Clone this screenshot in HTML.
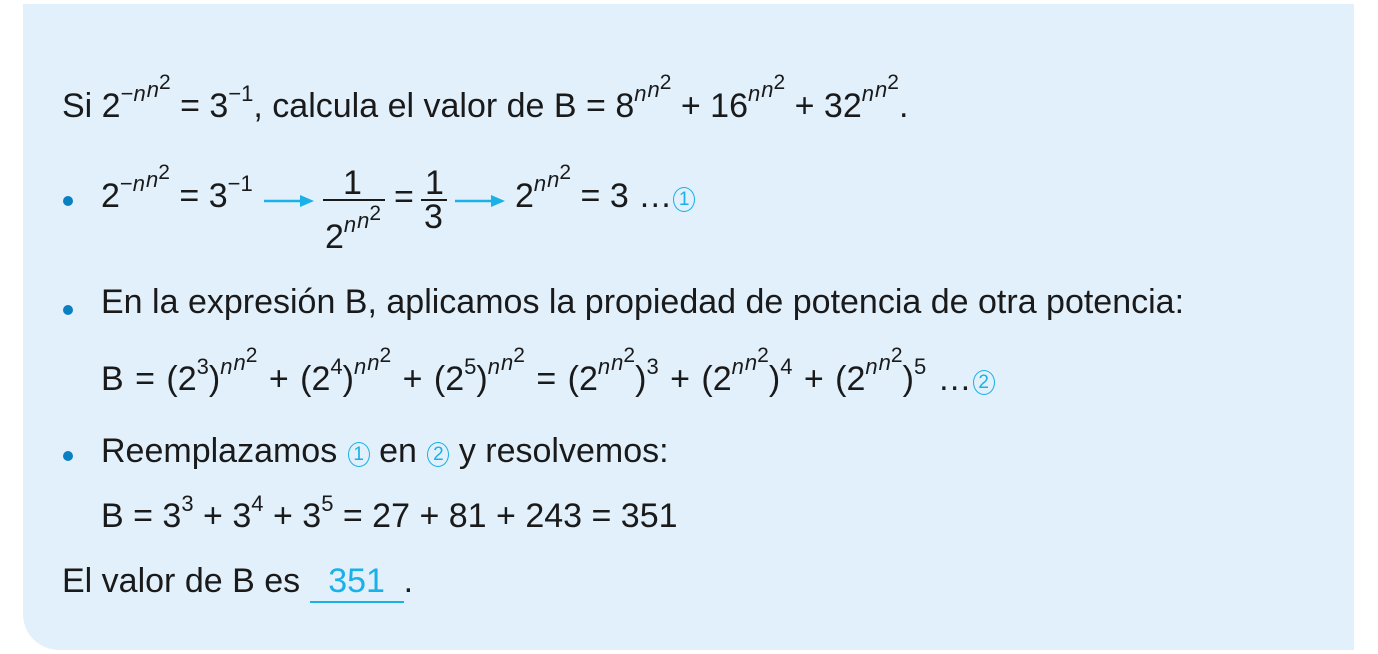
<!DOCTYPE html>
<html><head><meta charset="utf-8"><style>
body{margin:0;width:1378px;height:654px;background:#fff;position:relative;overflow:hidden;font-family:"Liberation Sans",Arial,sans-serif;color:#1a1a1a}
.panel{position:absolute;left:23px;top:4px;width:1331px;height:646px;background:#e1f0fb;border-bottom-left-radius:36px}
.l{position:absolute;font-size:34px;white-space:nowrap;line-height:1}
.e{font-size:22px;position:relative;top:-16px}
.e2{position:relative;top:-4px;margin-left:1px}
.e3{font-size:21px;position:relative;top:-8px}
i{font-style:italic}
.b{position:absolute;width:10px;height:10px;border-radius:50%;background:#0a7fc2}
.circ{display:inline-block;width:20px;height:23px;border:1.5px solid #1ab0e8;border-radius:50%;color:#1ab0e8;font-size:19px;line-height:23px;text-align:center;vertical-align:2px;box-sizing:content-box;margin-left:1px}
</style></head><body>
<div class="panel"></div>

<div class="l" style="left:62px;top:89px">Si 2<span class="e">−<i>n</i><span class="e2"><i>n</i><span class="e3">2</span></span></span> = 3<span class="e">−1</span>, calcula el valor de B = 8<span class="e"><i>n</i><span class="e2"><i>n</i><span class="e3">2</span></span></span> + 16<span class="e"><i>n</i><span class="e2"><i>n</i><span class="e3">2</span></span></span> + 32<span class="e"><i>n</i><span class="e2"><i>n</i><span class="e3">2</span></span></span>.</div>

<div class="b" style="left:63px;top:196px"></div>
<div class="l" style="left:101px;top:179px">2<span class="e">−<i>n</i><span class="e2"><i>n</i><span class="e3">2</span></span></span> = 3<span class="e">−1</span></div>
<svg style="position:absolute;left:262px;top:193px" width="250" height="16">
<line x1="2" y1="8" x2="44" y2="8" stroke="#1ab0e8" stroke-width="2.5"/><polygon points="38,2 52,8 38,14" fill="#1ab0e8"/>
<line x1="193" y1="8" x2="235" y2="8" stroke="#1ab0e8" stroke-width="2.5"/><polygon points="229,2 243,8 229,14" fill="#1ab0e8"/>
</svg>
<div class="l" style="left:343px;top:166px">1</div>
<div style="position:absolute;left:323px;top:199px;width:62px;height:2px;background:#1a1a1a"></div>
<div class="l" style="left:325px;top:220px">2<span class="e"><i>n</i><span class="e2"><i>n</i><span class="e3">2</span></span></span></div>
<div class="l" style="left:394px;top:180px">=</div>
<div class="l" style="left:425px;top:166px">1</div>
<div style="position:absolute;left:421px;top:199px;width:26px;height:2px;background:#1a1a1a"></div>
<div class="l" style="left:424px;top:200px">3</div>
<div class="l" style="left:515px;top:179px">2<span class="e"><i>n</i><span class="e2"><i>n</i><span class="e3">2</span></span></span> = 3 …<span class="circ">1</span></div>

<div class="b" style="left:63px;top:305px"></div>
<div class="l" style="left:101px;top:285px">En la expresión B, aplicamos la propiedad de potencia de otra potencia:</div>

<div class="l" style="left:101px;top:362px;word-spacing:2px">B = (2<span class="e">3</span>)<span class="e"><i>n</i><span class="e2"><i>n</i><span class="e3">2</span></span></span> + (2<span class="e">4</span>)<span class="e"><i>n</i><span class="e2"><i>n</i><span class="e3">2</span></span></span> + (2<span class="e">5</span>)<span class="e"><i>n</i><span class="e2"><i>n</i><span class="e3">2</span></span></span> = (2<span class="e"><i>n</i><span class="e2"><i>n</i><span class="e3">2</span></span></span>)<span class="e">3</span> + (2<span class="e"><i>n</i><span class="e2"><i>n</i><span class="e3">2</span></span></span>)<span class="e">4</span> + (2<span class="e"><i>n</i><span class="e2"><i>n</i><span class="e3">2</span></span></span>)<span class="e">5</span> …<span class="circ">2</span></div>

<div class="b" style="left:63px;top:451px"></div>
<div class="l" style="left:101px;top:434px">Reemplazamos <span class="circ">1</span> en <span class="circ">2</span> y resolvemos:</div>

<div class="l" style="left:101px;top:499px">B = 3<span class="e">3</span> + 3<span class="e">4</span> + 3<span class="e">5</span> = 27 + 81 + 243 = 351</div>

<div class="l" style="left:62px;top:564px">El valor de B es <span style="display:inline-block;width:94px;border-bottom:2px solid #1ab0e8;text-align:center;color:#1ab0e8;padding-bottom:3px">351</span>.</div>
</body></html>
